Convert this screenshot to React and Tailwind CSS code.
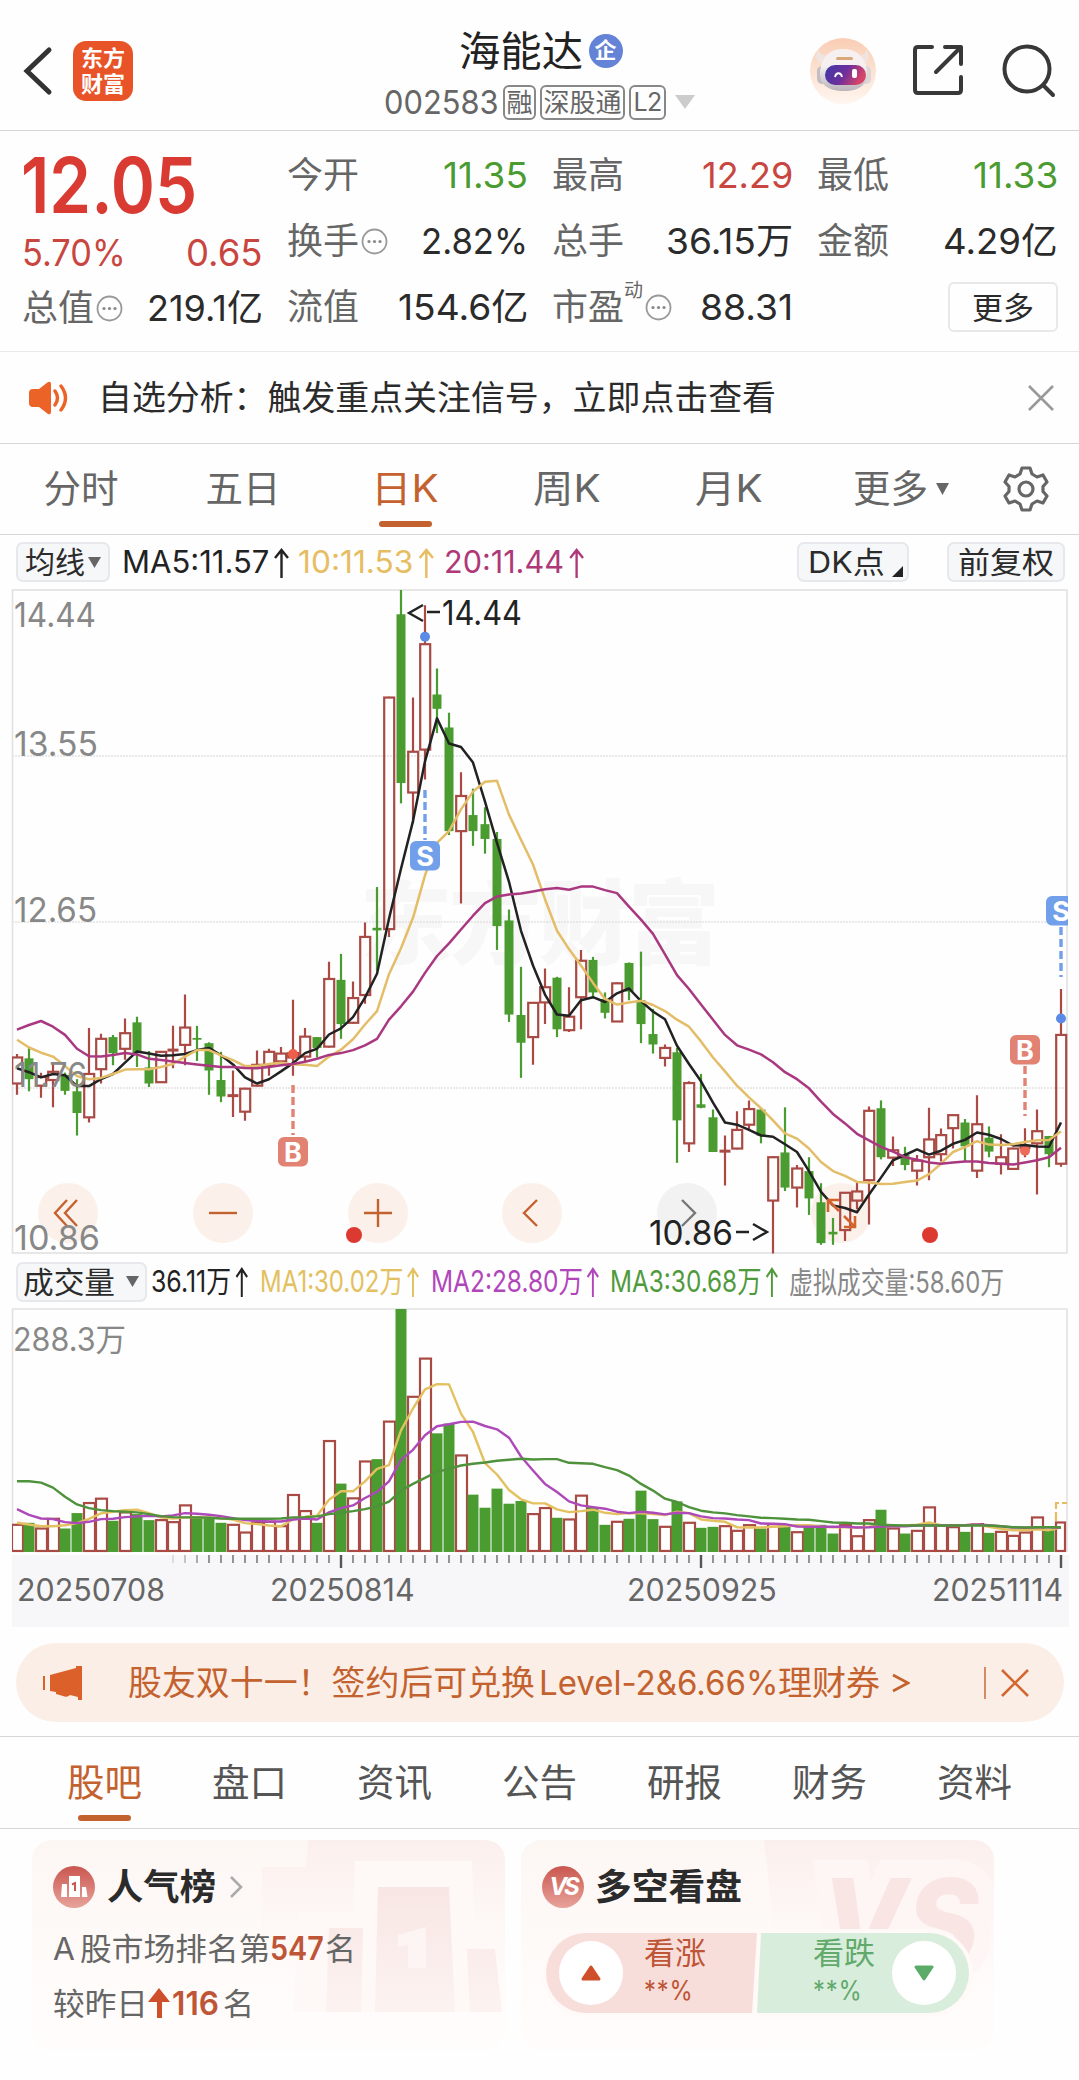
import { useLayoutEffect, useRef, useState } from 'react';
import { clsx } from 'clsx';

const RED = '#a94a44';
const GREEN = '#4a9b30';

// [kind, high, body top, body bottom, low]
const candles = [
  ['r', 1092, 1100, 1160, 1186], ['g', 1075, 1102, 1150, 1178], ['r', 1135, 1145, 1165, 1193], ['r', 1115, 1133, 1152, 1215],
  ['g', 1135, 1140, 1177, 1186], ['g', 1150, 1178, 1228, 1280], ['r', 1032, 1138, 1238, 1250], ['r', 1045, 1057, 1127, 1160],
  ['g', 1048, 1053, 1090, 1118], ['r', 1010, 1044, 1080, 1105], ['g', 1006, 1019, 1090, 1122], ['g', 1085, 1123, 1160, 1168],
  ['r', 1087, 1087, 1157, 1157], ['r', 1027, 1083, 1083, 1125], ['r', 955, 1031, 1071, 1118], ['g', 1027, 1055, 1059, 1108],
  ['g', 1065, 1067, 1130, 1186], ['g', 1087, 1152, 1190, 1203], ['r', 1130, 1188, 1188, 1237], ['r', 1170, 1172, 1225, 1246],
  ['r', 1084, 1117, 1165, 1167], ['r', 1080, 1087, 1118, 1142], ['r', 1076, 1091, 1109, 1115], ['r', 967, 1090, 1100, 1142],
  ['r', 1032, 1052, 1098, 1110], ['g', 1053, 1053, 1078, 1100], ['r', 879, 919, 1075, 1077], ['g', 861, 921, 1023, 1057],
  ['r', 925, 963, 1020, 1022], ['r', 789, 822, 956, 976], ['g', 707, 801, 807, 900], ['r', 268, 270, 804, 822],
  ['g', 22, 78, 467, 514], ['r', 270, 395, 489, 560], ['r', 57, 147, 390, 459], ['g', 203, 263, 296, 352],
  ['g', 305, 339, 578, 587], ['r', 442, 497, 578, 745], ['g', 480, 541, 578, 612], ['g', 523, 562, 596, 630],
  ['g', 580, 596, 797, 852], ['g', 759, 784, 1001, 1018], ['g', 891, 1002, 1066, 1147], ['r', 972, 974, 1053, 1117],
  ['r', 895, 938, 973, 1023], ['g', 914, 916, 1035, 1053], ['r', 938, 1006, 1037, 1041], ['r', 852, 877, 961, 1035],
  ['g', 868, 875, 950, 962], ['g', 950, 965, 997, 1010], ['r', 927, 929, 1017, 1018], ['g', 881, 882, 948, 968],
  ['g', 856, 968, 1023, 1067], ['g', 988, 1046, 1070, 1091], ['r', 1070, 1078, 1101, 1121], ['g', 1078, 1088, 1245, 1343],
  ['r', 1155, 1159, 1298, 1318], ['g', 1138, 1208, 1216, 1217], ['g', 1220, 1238, 1318, 1318], ['r', 1280, 1316, 1316, 1395],
  ['r', 1224, 1267, 1310, 1312], ['r', 1199, 1219, 1255, 1265], ['g', 1218, 1220, 1280, 1298], ['r', 1328, 1330, 1430, 1552],
  ['g', 1215, 1319, 1400, 1408], ['r', 1348, 1356, 1400, 1446], ['g', 1330, 1362, 1425, 1463], ['g', 1390, 1434, 1528, 1532],
  ['g', 1470, 1502, 1508, 1532], ['r', 1410, 1412, 1498, 1523], ['r', 1388, 1409, 1430, 1450], ['r', 1213, 1223, 1383, 1485],
  ['g', 1199, 1217, 1330, 1335], ['r', 1282, 1314, 1331, 1350], ['g', 1306, 1325, 1348, 1360], ['r', 1325, 1338, 1361, 1395],
  ['r', 1216, 1289, 1330, 1383], ['r', 1264, 1279, 1323, 1340], ['r', 1232, 1233, 1263, 1310], ['g', 1242, 1250, 1305, 1340],
  ['r', 1187, 1254, 1361, 1378], ['g', 1259, 1285, 1317, 1330], ['r', 1277, 1330, 1345, 1370], ['r', 1308, 1310, 1357, 1358],
  ['r', 1263, 1308, 1308, 1330], ['r', 1220, 1270, 1298, 1416], ['g', 1281, 1281, 1323, 1353], ['r', 942, 1048, 1345, 1352],
];

const ma5 = [1125, 1134, 1146, 1138, 1141, 1166, 1166, 1150, 1138, 1112, 1086, 1091, 1096, 1095, 1092, 1083, 1078, 1095, 1116, 1146, 1160, 1150, 1132, 1113, 1090, 1080, 1047, 1033, 1007, 962, 907, 780, 665, 555, 417, 318, 376, 384, 420, 510, 605, 695, 808, 888, 955, 1001, 1004, 968, 961, 972, 952, 941, 970, 994, 1012, 1073, 1115, 1155, 1204, 1250, 1255, 1267, 1280, 1283, 1300, 1318, 1362, 1410, 1441, 1447, 1457, 1416, 1377, 1337, 1325, 1312, 1324, 1315, 1299, 1290, 1273, 1278, 1288, 1303, 1302, 1305, 1306, 1250];
const ma10 = [1059, 1077, 1089, 1098, 1120, 1143, 1150, 1147, 1138, 1128, 1127, 1127, 1122, 1115, 1098, 1083, 1083, 1095, 1106, 1120, 1120, 1115, 1112, 1116, 1117, 1120, 1098, 1082, 1058, 1024, 993, 908, 848, 778, 680, 605, 578, 528, 487, 464, 462, 540, 598, 655, 735, 808, 850, 888, 928, 965, 978, 973, 969, 979, 993, 1013, 1029, 1063, 1100, 1132, 1165, 1192, 1217, 1245, 1275, 1287, 1310, 1341, 1362, 1373, 1387, 1388, 1392, 1391, 1387, 1384, 1369, 1345, 1318, 1307, 1293, 1301, 1302, 1300, 1295, 1291, 1290, 1270];
const ma20 = [1036, 1025, 1016, 1029, 1048, 1080, 1097, 1098, 1094, 1090, 1093, 1103, 1106, 1109, 1113, 1116, 1119, 1122, 1122, 1124, 1125, 1122, 1118, 1115, 1110, 1103, 1094, 1090, 1083, 1072, 1057, 1013, 982, 948, 905, 866, 837, 805, 773, 744, 729, 724, 722, 717, 712, 709, 713, 706, 706, 714, 721, 752, 782, 815, 862, 910, 942, 978, 1013, 1048, 1072, 1082, 1093, 1111, 1134, 1150, 1171, 1202, 1230, 1252, 1276, 1291, 1306, 1317, 1330, 1336, 1342, 1345, 1342, 1340, 1340, 1343, 1345, 1347, 1342, 1337, 1330, 1308];

const volumes = [822, 816, 833, 804, 833, 787, 757, 744, 810, 785, 790, 808, 808, 814, 764, 800, 803, 816, 822, 845, 815, 813, 826, 733, 781, 816, 572, 699, 743, 633, 626, 514, 178, 440, 326, 549, 520, 615, 732, 771, 714, 759, 751, 790, 772, 801, 806, 735, 769, 822, 813, 804, 720, 805, 828, 752, 816, 831, 828, 826, 840, 823, 833, 820, 820, 844, 822, 822, 848, 823, 856, 808, 777, 833, 848, 840, 770, 823, 829, 843, 820, 846, 843, 855, 845, 800, 838, 815];
const vol5 = [816, 821, 826, 826, 823, 817, 804, 788, 783, 778, 777, 787, 800, 803, 800, 799, 800, 802, 806, 817, 820, 824, 826, 806, 798, 795, 747, 722, 722, 692, 655, 644, 540, 475, 418, 402, 403, 490, 545, 638, 672, 718, 746, 758, 758, 776, 784, 781, 777, 786, 790, 787, 788, 790, 793, 783, 787, 806, 810, 813, 829, 830, 830, 828, 826, 823, 823, 828, 829, 829, 830, 828, 824, 826, 824, 822, 815, 823, 823, 823, 820, 828, 834, 838, 838, 835, 838, 830];
const vol10 = [775, 792, 803, 805, 814, 817, 813, 805, 804, 799, 797, 795, 797, 794, 787, 789, 792, 796, 802, 808, 810, 812, 812, 806, 803, 806, 785, 772, 764, 742, 724, 692, 628, 598, 555, 528, 522, 515, 514, 527, 537, 562, 618, 660, 700, 724, 752, 764, 769, 774, 783, 787, 783, 786, 791, 786, 787, 797, 802, 803, 806, 808, 818, 819, 820, 827, 828, 828, 828, 828, 830, 829, 827, 826, 826, 824, 823, 824, 824, 823, 821, 823, 826, 830, 831, 829, 829, 831];
const vol20 = [692, 692, 696, 711, 738, 761, 772, 778, 781, 783, 785, 790, 796, 799, 800, 800, 801, 803, 804, 804, 804, 804, 803, 800, 799, 797, 790, 786, 781, 775, 767, 753, 720, 700, 682, 664, 655, 645, 640, 636, 631, 628, 625, 627, 626, 626, 637, 638, 640, 650, 659, 675, 700, 720, 744, 754, 769, 780, 785, 788, 793, 797, 801, 802, 804, 806, 807, 811, 815, 816, 818, 818, 822, 823, 824, 824, 824, 824, 824, 824, 824, 824, 826, 829, 830, 829, 829, 829];

const xAt = (i) => 17 + i * 12;
const py = (v) => (v - 22) / 2.306 + 1;
const vy = (v) => (v - 178) / 2.984 + 1;
const toPoints = (data, y) => data.map((v, i) => `${xAt(i)},${y(v).toFixed(1)}`).join(' ');

// Squeezes or stretches a single line of text to the width of its box
const Fit = ({ className, children }) => {
  const inner = useRef(null);
  const [scale, setScale] = useState(1);

  useLayoutEffect(() => {
    const el = inner.current;
    setScale(el.parentElement.clientWidth / el.offsetWidth);
  }, []);

  return (
    <span className={clsx('inline-block shrink-0 whitespace-nowrap text-left', className)}>
      <span ref={inner} className="inline-block origin-left" style={{ transform: `scaleX(${scale})` }}>
        {children}
      </span>
    </span>
  );
};

const Up = () => (
  <svg className="inline-block align-[-5px] ml-[5px] w-[15px] h-[30px]" viewBox="0 0 15 30" fill="none" stroke="currentColor" strokeWidth="2.4">
    <path d="M7.500 30 V2 M1 10 L7.500 2 L14 10" />
  </svg>
);

const MoreDots = () => (
  <svg className="w-[27px] h-[27px] ml-[2px] shrink-0" viewBox="0 0 27 27" fill="none">
    <circle cx="13.5" cy="13.5" r="12" stroke="#999" strokeWidth="1.8" />
    <circle cx="8" cy="13.5" r="1.6" fill="#888" />
    <circle cx="13.5" cy="13.5" r="1.6" fill="#888" />
    <circle cx="19" cy="13.5" r="1.6" fill="#888" />
  </svg>
);

const Header = () => (
  <header className="h-[131px] flex justify-between border-b border-[#d4d6d8] pl-[23px] pr-[23px]">
    <div className="flex items-center gap-[20px] w-[280px] pt-[12px]">
      <svg className="w-[30px] h-[50px]" viewBox="0 0 30 50" fill="none" stroke="#333" strokeWidth="5" strokeLinecap="round">
        <path d="M26 4 L4 25 L26 46" />
      </svg>
      <div className="w-[60px] h-[60px] rounded-[13px] bg-[#e85428] text-white font-bold text-[22px] leading-[26px] flex flex-col items-center justify-center">
        <span>东方</span>
        <span>财富</span>
      </div>
    </div>

    <div className="flex flex-col items-center pt-[28px]">
      <div className="flex items-center gap-[6px] h-[46px] pl-[2px]">
        <Fit className="w-[124px] text-[41px] leading-[46px] text-[#222]">海能达</Fit>
        <span className="w-[34px] h-[34px] rounded-full bg-[#6483d6] text-white text-[22px] font-bold leading-[33px] text-center">企</span>
      </div>
      <div className="flex items-center h-[36px] mt-[10px] text-[#666]">
        <Fit className="w-[115px] text-[33px] leading-[36px]">002583</Fit>
        <span className="ml-[4px] w-[33px] h-[35px] border-2 border-[#888] rounded-[6px] text-[26px] leading-[31px] flex justify-center">融</span>
        <span className="ml-[4px] w-[85px] h-[35px] border-2 border-[#888] rounded-[6px] text-[26px] leading-[31px] flex justify-center">深股通</span>
        <span className="ml-[4px] w-[37px] h-[35px] border-2 border-[#888] rounded-[6px] text-[25px] leading-[31px] flex justify-center tracking-tight">L2</span>
        <svg className="ml-[9px] w-[20px] h-[14px]" viewBox="0 0 20 14">
          <path d="M0 0H20L10 14Z" fill="#ccc" />
        </svg>
      </div>
    </div>

    <div className="flex items-center pt-[12px] w-[280px] justify-end">
      <svg className="w-[66px] h-[66px]" viewBox="0 0 66 66">
        <defs>
          <linearGradient id="halo" x1="0" y1="0" x2="0" y2="1">
            <stop offset="0" stopColor="#f9cdb4" />
            <stop offset="1" stopColor="#fff6f0" />
          </linearGradient>
          <linearGradient id="visor" x1="0" y1="0" x2="1" y2="0.3">
            <stop offset="0" stopColor="#3d3aa8" />
            <stop offset="0.55" stopColor="#6c2f9c" />
            <stop offset="1" stopColor="#d84468" />
          </linearGradient>
          <linearGradient id="shell" x1="0" y1="0" x2="0" y2="1">
            <stop offset="0.4" stopColor="#f6f1f0" />
            <stop offset="1" stopColor="#b9b4ba" />
          </linearGradient>
        </defs>
        <circle cx="33" cy="33" r="33" fill="url(#halo)" />
        <path d="M10 26 C5 20 5 16 9 12 C10 17 13 18 18 17 Z M55 26 C60 20 60 16 56 12 C55 17 52 18 47 17 Z" fill="#efe4e0" />
        <rect x="7" y="28" width="10" height="18" rx="5" fill="#c3bcc2" />
        <rect x="50" y="28" width="11" height="18" rx="5" fill="#dcd6d8" />
        <path d="M33 11 C46 11 54 18 57 32 C59 46 50 53 34 53 C17 53 9 46 10 33 C12 18 20 11 33 11Z" fill="url(#shell)" />
        <rect x="26" y="19" width="17" height="3" rx="1.5" fill="#d9a878" />
        <rect x="15" y="27" width="41" height="20" rx="10" fill="url(#visor)" />
        <path d="M25 39 C26 34 31 34 32 39" fill="none" stroke="#fff" strokeWidth="1.8" />
        <rect x="42" y="31" width="5" height="9" rx="2" fill="#fff" />
      </svg>
      <svg className="ml-[36px] w-[54px] h-[54px]" viewBox="0 0 54 54" fill="none" stroke="#383838" strokeWidth="4" strokeLinecap="round" strokeLinejoin="round">
        <path d="M20 3 H6 Q3 3 3 6 V46 Q3 49 6 49 H46 Q49 49 49 46 V33" />
        <path d="M33 3 H49 V20 M48 4 L24 28" />
      </svg>
      <svg className="ml-[36px] w-[54px] h-[54px]" viewBox="0 0 54 54" fill="none" stroke="#383838" strokeWidth="4" strokeLinecap="round">
        <circle cx="25" cy="25" r="22.5" />
        <path d="M42 42 L51 51" />
      </svg>
    </div>
  </header>
);

const Stat = ({ label, value, width, color, dots, sup }) => (
  <div className="flex items-center justify-between h-[66px]">
    <span className="flex items-center text-[36px] leading-none text-[#666]">
      {label}
      {sup && <sup className="text-[19px] -top-[17px] leading-none">{sup}</sup>}
      {dots && <MoreDots />}
    </span>
    <Fit className={clsx('text-[36px] leading-none', width, color || 'text-[#2b2b2b]')}>{value}</Fit>
  </div>
);

const Quote = () => (
  <section className="h-[221px] grid grid-cols-4 gap-x-[24px] pl-[22px] pr-[21px] pt-[11px] border-b border-[#e8eaeb]">
    <div className="flex flex-col">
      <div className="h-[87px] flex items-center">
        <Fit className="-ml-[1px] w-[176px] text-[77px] leading-none font-semibold text-[#d93b33]">12.05</Fit>
      </div>
      <div className="h-[46px] flex items-center justify-between text-[#c94640]">
        <Fit className="w-[104px] text-[37px] leading-none">5.70%</Fit>
        <Fit className="w-[77px] text-[37px] leading-none">0.65</Fit>
      </div>
      <Stat label="总值" dots value="219.1亿" width="w-[116px]" />
    </div>
    <div>
      <Stat label="今开" value="11.35" width="w-[85px]" color="text-[#4a9b30]" />
      <Stat label="换手" dots value="2.82%" width="w-[107px]" />
      <Stat label="流值" value="154.6亿" width="w-[130px]" />
    </div>
    <div>
      <Stat label="最高" value="12.29" width="w-[91px]" color="text-[#c94640]" />
      <Stat label="总手" value="36.15万" width="w-[127px]" />
      <Stat label="市盈" sup="动" dots value="88.31" width="w-[93px]" />
    </div>
    <div>
      <Stat label="最低" value="11.33" width="w-[85px]" color="text-[#4a9b30]" />
      <Stat label="金额" value="4.29亿" width="w-[115px]" />
      <div className="flex justify-end items-center h-[66px]">
        <button className="w-[110px] h-[50px] border-2 border-[#e8e8e8] rounded-[6px] text-[31px] leading-none text-[#2b2b2b]">更多</button>
      </div>
    </div>
  </section>
);

const Notice = () => (
  <section className="h-[92px] flex items-center border-b border-[#d4d6d8] pl-[29px] pr-[24px]">
    <svg className="w-[41px] h-[34px]" viewBox="0 0 41 34">
      <path d="M4 8 H10 L19 1 Q22 0 22 3 V31 Q22 34 19 33 L10 26 H4 Q0 26 0 22 V12 Q0 8 4 8Z" fill="#ec6327" />
      <path d="M26 10 Q31 17 26 24 M32 5 Q41 17 32 29" fill="none" stroke="#ec6327" strokeWidth="3.4" strokeLinecap="round" />
    </svg>
    <Fit className="ml-[28px] w-[678px] text-[34px] leading-none text-[#2b2b2b]">自选分析：触发重点关注信号，立即点击查看</Fit>
    <svg className="ml-auto w-[28px] h-[28px]" viewBox="0 0 28 28" stroke="#999" strokeWidth="2.6">
      <path d="M2 2 L26 26 M26 2 L2 26" />
    </svg>
  </section>
);

const periods = ['分时', '五日', '日K', '周K', '月K'];

const PeriodTabs = () => (
  <nav className="h-[91px] flex border-b border-[#d4d6d8] text-[37.5px] text-[#666]">
    {periods.map((name) => {
      const active = name === '日K';
      return (
        <button
          key={name}
          className={clsx('w-[162px] flex flex-col items-center leading-[90px]', active && 'text-[#c4622f]')}
        >
          {name.endsWith('K') ? <Fit className="w-[68px] h-[77px]">{name}</Fit> : <span className="h-[77px]">{name}</span>}
          {active && <span className="block w-[53px] h-[6px] rounded-full bg-[#c4622f]" />}
        </button>
      );
    })}
    <button className="ml-[43px] flex items-center gap-[8px] h-[90px]">
      更多
      <svg className="w-[13px] h-[12px]" viewBox="0 0 13 12">
        <path d="M0 0H13L6.5 12Z" fill="#666" />
      </svg>
    </button>
    <svg className="ml-auto mr-[29px] mt-[21px] w-[48px] h-[48px]" viewBox="0 0 48 48" fill="none" stroke="#666" strokeWidth="3.2" strokeLinejoin="round">
      <path d="M20 3 H28 L30 9 L35 12 L41 10 L45 17 L41 21.5 V26.5 L45 31 L41 38 L35 36 L30 39 L28 45 H20 L18 39 L13 36 L7 38 L3 31 L7 26.5 V21.5 L3 17 L7 10 L13 12 L18 9 Z" />
      <circle cx="24" cy="24" r="7" />
    </svg>
  </nav>
);

const chip = 'flex items-center border-2 border-[#e6e8ec] bg-[#f6f7f9] rounded-[7px] h-[40px] leading-none text-[#2b2b2b] shrink-0';

const MaBar = () => (
  <div className="h-[54px] flex items-center pl-[16px] pr-[14px] text-[30px] leading-none">
    <button className={clsx(chip, 'w-[94px] pl-[7px] gap-[3px]')}>
      <Fit className="w-[60px]">均线</Fit>
      <svg className="w-[13px] h-[11px]" viewBox="0 0 13 11"><path d="M0 0H13L6.5 11Z" fill="#666" /></svg>
    </button>
    <Fit className="ml-[12px] w-[167px] text-[31px] text-[#222]">MA5:11.57<Up /></Fit>
    <Fit className="ml-[9px] w-[136px] text-[31px] text-[#e6bd62]">10:11.53<Up /></Fit>
    <Fit className="ml-[10px] w-[140px] text-[31px] text-[#ae3878]">20:11.44<Up /></Fit>
    <button className={clsx(chip, 'ml-auto w-[112px] pl-[9px] gap-[7px]')}>
      <Fit className="w-[77px]">DK点</Fit>
      <svg className="w-[11px] h-[11px] mt-[18px]" viewBox="0 0 11 11"><path d="M11 0V11H0Z" fill="#222" /></svg>
    </button>
    <button className={clsx(chip, 'ml-[38px] w-[118px] justify-center')}>
      <Fit className="w-[96px]">前复权</Fit>
    </button>
  </div>
);

const Marker = ({ x, y, letter, color, from, to }) => (
  <g>
    <line x1={x} x2={x} y1={from} y2={to} stroke={color} strokeWidth="3.4" strokeDasharray="8 4" />
    <rect x={x - 15} y={y} width="30" height="29.5" rx="6" fill={color} />
    <text x={x} y={y + 24.5} textAnchor="middle" fontSize="27" fontWeight="700" fill="#fff">{letter}</text>
  </g>
);

const tools = [
  { x: 68, d: 'M-1 -13 L-13 0 L-1 13 M9 -13 L-3 0 L9 13' },
  { x: 223, d: 'M-14 0 H14' },
  { x: 378, d: 'M-14 0 H14 M0 -14 V14' },
  { x: 532, d: 'M5 -13 L-8 0 L5 13' },
  { x: 687, d: 'M-5 -13 L8 0 L-5 13', disabled: true },
  { x: 841, d: 'M-13 -13 L-2 -2 M-13 -1 V-13 H-2 M3 3 L14 14 M14 3 V14 H3' },
];

const labels = [
  { text: '14.44', y: 38, w: 82 },
  { text: '13.55', y: 167, w: 84 },
  { text: '12.65', y: 333, w: 83 },
  { text: '11.76', y: 498, w: 73 },
  { text: '10.86', y: 661, w: 86 },
];

const PriceChart = () => (
  <svg className="block w-[1079px] h-[665px]" viewBox="0 0 1079 665" fontFamily="Inter, 'Noto Sans CJK SC', sans-serif">
    <clipPath id="plot"><rect x="12" y="0" width="1056" height="665" /></clipPath>
    <text x="360" y="368" fontSize="92" fontWeight="900" fill="#f7f7f7" textLength="360">东方财富</text>
    {[167, 333, 499].map((y) => (
      <line key={y} x1="12" x2="1067" y1={y} y2={y} stroke="#e2e2e2" strokeWidth="1.5" strokeDasharray="2 1" />
    ))}
    <rect x="12.5" y="1" width="1054.5" height="663" fill="none" stroke="#e2e2e2" strokeWidth="1.6" />

    {tools.map((t) => (
      <g key={t.x} transform={`translate(${t.x} 624)`}>
        <circle r="30" fill={t.disabled ? '#f2f2f2' : '#fbf1ea'} />
        {t.x !== 841 && <path d={t.d} fill="none" stroke={t.disabled ? '#777' : '#c4622f'} strokeWidth="2.4" />}
      </g>
    ))}
    <circle cx="354" cy="646" r="8" fill="#dc3a30" />
    <circle cx="930" cy="646" r="8" fill="#dc3a30" />

    <g clipPath="url(#plot)">
      {candles.map(([kind, high, top, bottom, low], i) => {
        const x = xAt(i);
        const h = py(bottom) - py(top);
        return kind === 'g' ? (
          <g key={i} fill={GREEN}>
            <rect x={x - 1.1} y={py(high)} width="2.2" height={py(low) - py(high)} />
            <rect x={x - 4.5} y={py(top)} width="9" height={h} />
          </g>
        ) : (
          <g key={i} stroke={RED} strokeWidth="2.2" fill="none">
            <path d={`M${x} ${py(high)}V${py(top)}M${x} ${py(bottom)}V${py(low)}`} />
            {h < 1 ? <path d={`M${x - 5.5} ${py(top)}h11`} strokeWidth="3" /> : <rect x={x - 4.8} y={py(top)} width="10" height={h} />}
          </g>
        );
      })}
      <circle cx={xAt(23)} cy={py(1092)} r="5" fill="#ee5f4c" />
      <circle cx={xAt(84)} cy={py(1315)} r="5" fill="#ee6a58" />
      <circle cx={xAt(34)} cy={py(130)} r="5" fill="#5b8be6" />
      <circle cx={xAt(87)} cy={py(1010)} r="5" fill="#5b8be6" />
    </g>

    <g fill="none" strokeWidth="2.5" strokeLinejoin="round">
      <polyline points={toPoints(ma5, py)} stroke="#222" />
      <polyline points={toPoints(ma10, py)} stroke="#e4bd68" />
      <polyline points={toPoints(ma20, py)} stroke="#a93880" />
    </g>
    <g clipPath="url(#plot)">
      <Marker x={xAt(23)} y={548} letter="B" color="#e18273" from={496} to={546} />
      <Marker x={xAt(34)} y={252} letter="S" color="#719fea" from={201} to={251} />
      <Marker x={xAt(84)} y={446} letter="B" color="#e18273" from={477} to={527} />
      <Marker x={xAt(87)} y={307} letter="S" color="#719fea" from={338} to={388} />
    </g>
    <path transform="translate(841 624)" d={tools[5].d} fill="none" stroke="#d4622b" strokeWidth="2.6" />

    <g fontSize="34" fill="#888">
      {labels.map((l) => (
        <text key={l.text} x="14" y={l.y} textLength={l.w} lengthAdjust="spacingAndGlyphs">{l.text}</text>
      ))}
    </g>
    <g fontSize="34" fill="#222">
      <text x="442" y="36" textLength="80" lengthAdjust="spacingAndGlyphs">14.44</text>
      <path d="M423 16 L409 24 L423 32 M427 23 H440" fill="none" stroke="#222" strokeWidth="2.4" />
      <text x="649" y="656" textLength="84" lengthAdjust="spacingAndGlyphs">10.86</text>
      <path d="M736 643 H749 M753 635 L767 643 L753 651" fill="none" stroke="#222" strokeWidth="2.4" />
    </g>
  </svg>
);

const VolumeBar = () => (
  <div className="h-[55px] flex items-center pl-[16px] text-[30px] leading-none">
    <button className={clsx(chip, 'w-[131px] pl-[5px] gap-[11px]')}>
      <Fit className="w-[92px]">成交量</Fit>
      <svg className="w-[13px] h-[11px]" viewBox="0 0 13 11"><path d="M0 0H13L6.5 11Z" fill="#666" /></svg>
    </button>
    <Fit className="ml-[4px] w-[97px] text-[#222]">36.11万<Up /></Fit>
    <Fit className="ml-[12px] w-[159px] text-[#e3c060]">MA1:30.02万<Up /></Fit>
    <Fit className="ml-[12px] w-[168px] text-[#b146bb]">MA2:28.80万<Up /></Fit>
    <Fit className="ml-[11px] w-[168px] text-[#4f9a3c]">MA3:30.68万<Up /></Fit>
    <Fit className="ml-[11px] w-[215px] text-[#888]">虚拟成交量:58.60万</Fit>
  </div>
);

const VolumeChart = () => (
  <svg className="block -mt-px w-[1079px] h-[247px]" viewBox="0 0 1079 247" fontFamily="Inter, 'Noto Sans CJK SC', sans-serif">
    <clipPath id="bars"><rect x="12" y="0" width="1056" height="247" /></clipPath>
    <path d="M12.5 244 V1 H1067 V244" fill="none" stroke="#e2e2e2" strokeWidth="1.6" />
    <text x="13" y="43" fontSize="32" fill="#888" textLength="113" lengthAdjust="spacingAndGlyphs">288.3万</text>
    <g clipPath="url(#bars)">
      {volumes.map((v, i) =>
        candles[i][0] === 'g' ? (
          <rect key={i} x={xAt(i) - 5.5} y={vy(v)} width="11" height={vy(903) - vy(v)} fill={GREEN} />
        ) : (
          <rect key={i} x={xAt(i) - 5} y={vy(v)} width={i === 87 ? 9 : 11} height={vy(903) - vy(v) - 1} fill="#fff" stroke={RED} strokeWidth="2.2" />
        )
      )}
    </g>
    <path d="M1056 213 V195 H1067" fill="none" stroke="#e6bd62" strokeWidth="2.2" strokeDasharray="9 3" />
    <g fill="none" strokeWidth="2.4" strokeLinejoin="round">
      <polyline points={toPoints(vol5, vy)} stroke="#e3c060" />
      <polyline points={toPoints(vol10, vy)} stroke="#ad49b8" />
      <polyline points={toPoints(vol20, vy)} stroke="#4f923c" />
    </g>
  </svg>
);

const DateAxis = () => (
  <div className="ml-[12px] w-[1057px] h-[72px] bg-[#f7f7f9] text-[31px] leading-none text-[#666]">
    <svg className="block w-[1057px] h-[15px]" viewBox="12 0 1057 15">
      {candles.map((_, i) => {
        if (i < 13) return null;
        const major = i === 27 || i === 57 || i === 87;
        return (
          <line
            key={i}
            x1={xAt(i)}
            x2={xAt(i)}
            y1="0"
            y2={major ? 13 : 8}
            stroke={major ? '#555' : '#888'}
            strokeWidth={major ? 2.4 : 1.8}
            opacity={i < 16 ? (i - 12) / 4 : 1}
          />
        );
      })}
    </svg>
    <div className="flex items-center h-[38px] pl-[5px]">
      <Fit className="w-[148px]">20250708</Fit>
      <Fit className="ml-[105px] w-[145px]">20250814</Fit>
      <Fit className="ml-[212px] w-[150px]">20250925</Fit>
      <Fit className="ml-[155px] w-[131px]">20251114</Fit>
    </div>
  </div>
);

const Banner = () => (
  <div className="ml-[16px] mr-[15px] mt-[16px] h-[79px] rounded-[40px] bg-[#fbeee6] flex items-center pl-[26px] pr-[34px] text-[#c4622f]">
    <svg className="w-[41px] h-[34px]" viewBox="0 0 41 34" fill="#db602a">
      <path d="M1 10 H3 V24 H1Z M8 9 L34 2 V0 H40 V34 H36 V31 L28 29 Q25 32 21 30 L14 28 V26 L8 25Z" />
    </svg>
    <div className="flex items-center ml-[45px] text-[34px] leading-none">
      <Fit className="w-[407px]">股友双十一！签约后可兑换</Fit>
      <Fit className="ml-[4px] w-[239px]">Level-2&6.66%</Fit>
      <Fit className="w-[102px]">理财券</Fit>
    </div>
    <svg className="ml-[12px] w-[18px] h-[20px]" viewBox="0 0 18 20" fill="none" stroke="#c4622f" strokeWidth="2.6">
      <path d="M1 2 L16 10 L1 18" />
    </svg>
    <span className="ml-auto w-[2px] h-[32px] bg-[#d58a63]" />
    <svg className="ml-[14px] w-[30px] h-[30px]" viewBox="0 0 30 30" stroke="#d4672f" strokeWidth="2.6">
      <path d="M2 2 L28 28 M28 2 L2 28" />
    </svg>
  </div>
);

const sections = ['股吧', '盘口', '资讯', '公告', '研报', '财务', '资料'];

const SectionTabs = () => (
  <nav className="mt-[14px] h-[93px] flex justify-between border-y border-[#d4d6d8] pl-[67px] pr-[67px] text-[37.5px] text-[#555]">
    {sections.map((name) => (
      <button key={name} className={clsx('flex flex-col items-center leading-[91px]', name === '股吧' && 'text-[#c4622f]')}>
        <span className="h-[78px]">{name}</span>
        {name === '股吧' && <span className="w-[53px] h-[6px] rounded-full bg-[#c4622f]" />}
      </button>
    ))}
  </nav>
);

const PopularityCard = () => (
  <div className="relative w-[473px] h-[210px] rounded-[20px] bg-linear-to-b from-[#fdf7f4] to-[#fffdfc] overflow-hidden">
    <svg className="absolute inset-0 w-[473px] h-[210px]" viewBox="0 0 473 210">
      <defs>
        <linearGradient id="tower" x1="0" y1="0" x2="0" y2="1">
          <stop offset="0" stopColor="#f8e6e4" />
          <stop offset="1" stopColor="#fcf3f1" />
        </linearGradient>
        <linearGradient id="veil" x1="0" y1="0" x2="0" y2="1">
          <stop offset="0" stopColor="#fbefed" />
          <stop offset="1" stopColor="#fffdfc" stopOpacity="0" />
        </linearGradient>
      </defs>
      <path d="M276 0 H473 V175 H230 V27 H274Z" fill="url(#veil)" />
      <path d="M323 21 H440 L446 172 H262 L266 72 H321Z" fill="#fef8f6" />
      <path d="M346 47 H417 L423 172 H343Z M297 88 H331 L329 172 H294Z M435 109 H463 L470 172 H438Z" fill="url(#tower)" />
      <path d="M366 95 L394 87 V128 H376 V105 L366 107Z" fill="#fdf5f3" />
    </svg>
    <div className="relative px-[21px] pt-[23px]">
      <div className="flex items-center h-[48px]">
        <svg className="w-[42px] h-[42px]" viewBox="0 0 42 42">
          <defs>
            <linearGradient id="coin" x1="0" y1="0" x2="0" y2="1">
              <stop offset="0" stopColor="#c9564f" />
              <stop offset="1" stopColor="#e7a39b" />
            </linearGradient>
          </defs>
          <circle cx="21" cy="21" r="21" fill="url(#coin)" />
          <path d="M9 18 H14 V31 H8Z M16 10 H27 V31 H16Z M29 21 H33 L34.500 31 H29Z" fill="#fff" />
          <path d="M19 18.500 L22 17 V25" fill="none" stroke="#c9564f" strokeWidth="2" />
        </svg>
        <Fit className="ml-[12px] w-[109px] text-[36px] leading-none font-bold text-[#2b2b2b]">人气榜</Fit>
        <svg className="ml-[14px] w-[13px] h-[22px]" viewBox="0 0 13 22" fill="none" stroke="#aaa" strokeWidth="2.6">
          <path d="M1 1 L11 11 L1 21" />
        </svg>
      </div>
      <p className="flex items-center h-[40px] mt-[17px] text-[31px] leading-none text-[#666]">
        <Fit className="w-[217px]">A<span className="ml-[5px]">股市场排名第</span></Fit>
        <Fit className="w-[54px] text-[33px] font-semibold text-[#bd5536]">547</Fit>
        <Fit className="ml-[1px] w-[31px]">名</Fit>
      </p>
      <p className="flex items-center h-[40px] mt-[15px] text-[31px] leading-none text-[#666]">
        <Fit className="w-[95px]">较昨日</Fit>
        <svg className="w-[22px] h-[30px]" viewBox="0 0 22 30" fill="#cf4f2a">
          <path d="M11 0 L22 14 H14 V30 H9 V14 H0Z" />
        </svg>
        <Fit className="ml-[2px] w-[47px] text-[33px] font-semibold text-[#bd5536]">116</Fit>
        <Fit className="ml-[4px] w-[31px]">名</Fit>
      </p>
    </div>
  </div>
);

const SentimentCard = () => (
  <div className="relative w-[473px] h-[210px] rounded-[20px] bg-linear-to-b from-[#fdf7f4] to-[#fffdfc] overflow-hidden">
    <svg className="absolute inset-0 w-[473px] h-[210px]" viewBox="0 0 473 210" fontFamily="Inter, sans-serif">
      <path d="M243 0 H473 V175 H262Z" fill="url(#veil)" />
      <text x="300" y="125" fontSize="120" fontWeight="800" fontStyle="italic" fill="#f9e6e4" stroke="#fdf6f4" strokeWidth="36" paintOrder="stroke" textLength="158" lengthAdjust="spacingAndGlyphs">VS</text>
    </svg>
    <div className="relative px-[21px] pt-[23px]">
      <div className="flex items-center h-[48px]">
        <span className="w-[42px] h-[42px] rounded-full bg-linear-to-b from-[#c9564f] to-[#e7a39b] text-white text-[24px] leading-[41px] font-bold italic text-center tracking-[-3px]">VS</span>
        <Fit className="ml-[11px] w-[147px] text-[36px] leading-none font-bold text-[#2b2b2b]">多空看盘</Fit>
      </div>
    </div>
    <div className="relative ml-[21px] mt-[18px] w-[431px] h-[88px] p-[4px] rounded-full bg-[#fff9f7]">
      <svg className="absolute left-[4px] top-[4px] w-[423px] h-[80px]" viewBox="0 0 423 80">
        <clipPath id="pill"><rect width="423" height="80" rx="40" /></clipPath>
        <g clipPath="url(#pill)">
          <path d="M0 0 H211 L206 80 H0Z" fill="#f8dedb" />
          <path d="M215 0 H423 V80 H211Z" fill="#d9eddc" />
        </g>
      </svg>
      <div className="relative flex items-center h-[80px] px-[13px]">
        <span className="w-[64px] h-[64px] rounded-full bg-white flex items-center justify-center">
          <svg className="w-[20px] h-[16px]" viewBox="0 0 20 16"><path d="M10 2 L18 14 H2Z" fill="#cf4f2a" stroke="#cf4f2a" strokeWidth="3" strokeLinejoin="round" /></svg>
        </span>
        <div className="ml-[21px] w-[62px] h-[80px] flex flex-col text-[31px] text-[#bd5536]">
          <span className="leading-[40px]">看涨</span>
          <Fit className="w-[50px] text-[27px] leading-[36px] tracking-[1px]">**%</Fit>
        </div>
        <div className="ml-auto w-[62px] h-[80px] flex flex-col text-[31px] text-[#62aa6c]">
          <span className="leading-[40px]">看跌</span>
          <Fit className="w-[50px] text-[27px] leading-[36px] tracking-[1px]">**%</Fit>
        </div>
        <span className="ml-[17px] w-[64px] h-[64px] rounded-full bg-white flex items-center justify-center">
          <svg className="w-[20px] h-[16px]" viewBox="0 0 20 16"><path d="M10 14 L18 2 H2Z" fill="#5cab68" stroke="#5cab68" strokeWidth="3" strokeLinejoin="round" /></svg>
        </span>
      </div>
    </div>
  </div>
);

const App = () => {
  return (
    <div className="w-[1079px] h-[2080px] bg-[#fefefe] overflow-hidden font-[Inter,'Noto_Sans_CJK_SC',sans-serif]">
      <Header />
      <Quote />
      <Notice />
      <PeriodTabs />
      <MaBar />
      <PriceChart />
      <VolumeBar />
      <VolumeChart />
      <DateAxis />
      <Banner />
      <SectionTabs />
      <div className="flex gap-[16px] pl-[32px] pt-[11px]">
        <PopularityCard />
        <SentimentCard />
      </div>
    </div>
  );
};

export default App;
